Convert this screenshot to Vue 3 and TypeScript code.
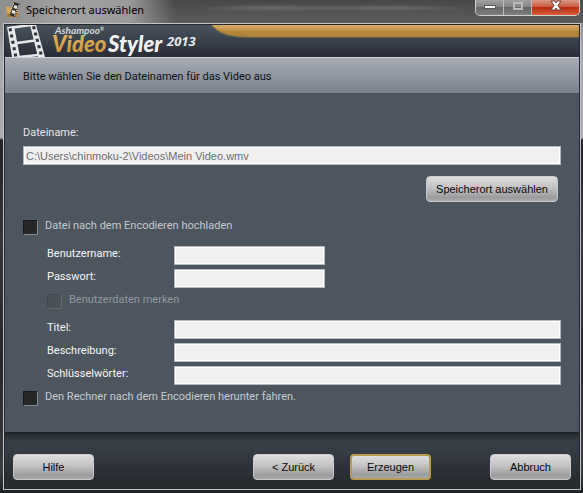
<script setup lang="ts">
import { ref } from 'vue'

interface Field {
  id: string
  label: string
  type: string
  short: boolean
}

const accountFields: Field[] = [
  { id: 'user', label: 'Benutzername:', type: 'text', short: true },
  { id: 'password', label: 'Passwort:', type: 'password', short: true },
]
const videoFields: Field[] = [
  { id: 'title', label: 'Titel:', type: 'text', short: false },
  { id: 'description', label: 'Beschreibung:', type: 'text', short: false },
  { id: 'keywords', label: 'Schlüsselwörter:', type: 'text', short: false },
]

const fileName = ref('C:\\Users\\chinmoku-2\\Videos\\Mein Video.wmv')
const values = ref<Record<string, string>>({})
const upload = ref(false)
const remember = ref(false)
const shutdown = ref(false)
const filmHoles = [0, 1, 2, 3, 4]
</script>

<template>
  <div class="window">
    <header class="titlebar">
      <svg class="app-icon" viewBox="0 0 16 16" aria-hidden="true">
        <path d="M0 5h12v10H1z" fill="#d5a458" />
        <path d="M1 11h11v4H1z" fill="#b77c32" />
        <path d="M8 0l6 2-5 13-6-2z" fill="#302d29" />
        <path d="M8.500 3l3 1-1 3-3-1zM6.500 8l3 1-1 3-3-1z" fill="#eee9da" />
        <path d="M7.500 1.500L3.500 12.500M13 3L8.500 14" stroke="#f4f1e9" stroke-dasharray="1.500 1" />
      </svg>
      <h1 class="title">Speicherort auswählen</h1>
      <div class="controls">
        <button class="control" type="button" aria-label="Minimieren">
          <svg viewBox="0 0 14 12"><rect x="1.500" y="5.500" width="11" height="3" fill="#fff" stroke="#55585c" /></svg>
        </button>
        <button class="control" type="button" aria-label="Maximieren" disabled>
          <svg viewBox="0 0 14 12"><rect x="3" y="3" width="8" height="6" fill="none" stroke="#b9bbbc" stroke-width="2" /></svg>
        </button>
        <button class="control close" type="button" aria-label="Schließen">
          <svg viewBox="0 0 14 12">
            <path d="M2 1h4l1 2 1-2h4L9 5.500 12 10H8L7 8l-1 2H2l3-4.500z" fill="#fff" stroke="#6d3f3c" />
          </svg>
        </button>
      </div>
    </header>

    <div class="client">
      <div class="brand">
        <svg class="logo" viewBox="0 0 200 32" role="img" aria-label="Ashampoo Video Styler 2013">
          <defs>
            <linearGradient id="gold" x1="0" y1="0" x2="0" y2="1">
              <stop offset="0" stop-color="#e9bd68" />
              <stop offset="1" stop-color="#c48b32" />
            </linearGradient>
          </defs>
          <path d="M2 2l7-1 6 31H7zM25 0h6l9 32h-7z" fill="#e6e7e9" />
          <path d="M8 2.500L26 0M12 18l18-2.500M14 32l19-2" fill="none" stroke="#e6e7e9" stroke-width="2.500" />
          <g v-for="n in filmHoles" :key="n" fill="#2f353e">
            <path :transform="`translate(${n * 1.3} ${n * 6.3})`" d="M3.500 3.500l3-.5.600 3-3 .5z" />
            <path :transform="`translate(${n * 1.7} ${n * 6.3})`" d="M27 1.500l3-.5.800 3-3 .5z" />
          </g>
          <text x="50" y="9" class="maker">Ashampoo<tspan class="mark" dy="-3">®</tspan></text>
          <text x="47" y="27" class="product" fill="url(#gold)">Video</text>
          <text x="103" y="27" class="product" fill="#f4f4f5">Styler</text>
          <text x="162" y="21" class="year">2013</text>
        </svg>
        <svg class="swoosh" viewBox="0 0 370 14" preserveAspectRatio="xMinYMin slice" aria-hidden="true">
          <defs>
            <linearGradient id="band" x1="0" y1="0" x2="0" y2="1">
              <stop offset="0" stop-color="#d5a967" />
              <stop offset=".35" stop-color="#c9994d" />
              <stop offset=".5" stop-color="#b58839" />
              <stop offset="1" stop-color="#ad8138" />
            </linearGradient>
          </defs>
          <path d="M0 0h2000v13H42C18 13 8 10 0 0z" fill="#596057" />
          <path d="M2 0h2000v12H42C20 12 10 9 2 0z" fill="url(#band)" />
        </svg>
      </div>
      <p class="headline">Bitte wählen Sie den Dateinamen für das Video aus</p>

      <main class="body">
        <label class="file-label" for="file">Dateiname:</label>
        <input id="file" v-model="fileName" class="box file" type="text" readonly />
        <div class="browse">
          <button class="btn wide" type="button">Speicherort auswählen</button>
        </div>

        <label class="check"><input v-model="upload" type="checkbox" />Datei nach dem Encodieren hochladen</label>
        <div class="group account">
          <div v-for="f in accountFields" :key="f.id" class="row">
            <label :for="f.id">{{ f.label }}</label>
            <input :id="f.id" v-model="values[f.id]" :type="f.type" class="box" :class="{ short: f.short }" />
          </div>
        </div>
        <label class="check nested"><input v-model="remember" type="checkbox" disabled />Benutzerdaten merken</label>
        <div class="group video">
          <div v-for="f in videoFields" :key="f.id" class="row">
            <label :for="f.id">{{ f.label }}</label>
            <input :id="f.id" v-model="values[f.id]" :type="f.type" class="box" />
          </div>
        </div>
        <label class="check"><input v-model="shutdown" type="checkbox" />Den Rechner nach dem Encodieren herunter fahren.</label>
      </main>

      <footer class="footer">
        <button class="btn help" type="button">Hilfe</button>
        <button class="btn" type="button">&lt; Zurück</button>
        <button class="btn primary" type="button">Erzeugen</button>
        <button class="btn cancel" type="button">Abbruch</button>
      </footer>
    </div>
  </div>
</template>

<style>
body {
  margin: 0;
  background: #111;
}
</style>

<style scoped>
* {
  box-sizing: border-box;
}
.window {
  display: flex;
  flex-direction: column;
  min-height: 100vh;
  padding: 0 2px 3px 3px;
  font: 11px/16px Roboto, "Liberation Sans", Arial, sans-serif;
  background:
    linear-gradient(#777, #a5a7aa 50px, #a9acb0 138px, #202225 140px, #34383c 240px, #25282b 360px, #3b3d40 470px, #202122);
}
.titlebar {
  display: flex;
  align-items: flex-start;
  height: 23px;
  margin: 0 -2px 0 -3px;
  padding: 0 3px 0 6px;
  background:
    linear-gradient(90deg, #8d8d8d, #a2a2a2 70px, #999 130px, transparent 175px),
    radial-gradient(ellipse at 47% 8px, #6b6b6b 0, transparent 80px),
    radial-gradient(ellipse at 66% 8px, #6b6b6b 0, transparent 90px),
    linear-gradient(#484848, #5c5c5c);
}
.app-icon {
  width: 16px;
  height: 16px;
  margin-top: 2px;
}
.title {
  flex: 1;
  margin: 1px 0 0 4px;
  color: #000;
  font: 11px/18px "Noto Sans", sans-serif;
}
.controls {
  display: flex;
  height: 16px;
  border: 1px solid #d0d0d0;
  border-top: 0;
  border-radius: 0 0 5px 5px;
  overflow: hidden;
}
.control {
  display: flex;
  align-items: center;
  justify-content: center;
  width: 28px;
  padding: 0 0 4px;
  border: 0;
  border-right: 1px solid #bbb;
  background: linear-gradient(#a0a0a0, #858585 45%, #666 50%, #808080);
}
.control svg {
  width: 14px;
  height: 12px;
}
.close {
  width: 47px;
  border-right: 0;
  background: linear-gradient(#dc9a88, #cb5a42 45%, #b8290e 50%, #d9603c);
}
.client {
  display: flex;
  flex: 1;
  flex-direction: column;
  border: 1px solid #c1c4c8;
  outline: 1px solid #25272b;
  outline-offset: -2px;
  padding: 1px;
  background: #25272b;
}
.brand {
  display: flex;
  height: 32px;
  background: linear-gradient(#48525d, #292d36);
}
.logo {
  flex: none;
  width: 200px;
  height: 32px;
}
.swoosh {
  flex: 1;
  min-width: 0;
  height: 14px;
  margin-left: 5px;
}
.maker {
  fill: #d8dade;
  font: italic bold 10px Lato, sans-serif;
}
.mark {
  font-size: 5px;
}
.product {
  font: italic 900 22px Lato, sans-serif;
}
.year {
  fill: #e8e9eb;
  font: italic bold 13px "Open Sans", sans-serif;
}
.headline {
  margin: 0;
  padding: 11px 18px 9px;
  border-top: 1px solid #cdd0d6;
  color: #101114;
  line-height: 15px;
  background: linear-gradient(#a6abb4, #7b838d);
}
.body {
  display: flex;
  flex: 1;
  flex-direction: column;
  padding: 32px 18px 24px;
  background: #4d565f;
}
.file-label {
  color: #e2e5e9;
}
.box {
  flex: 1;
  min-width: 0;
  height: 19px;
  padding: 0 2px;
  border: 1px solid #b4b9be;
  border-radius: 0;
  outline: 1px solid #fff;
  outline-offset: -2px;
  background: #f0f0f1;
  color: #222;
  font: inherit;
}
.file {
  flex: none;
  margin-top: 5px;
  color: #6c6d70;
  font: 11px/16px "Liberation Sans", Arial, sans-serif;
}
.browse {
  display: flex;
  justify-content: flex-end;
  margin: 11px 3px 16px 0;
}
.btn {
  width: 81px;
  height: 26px;
  padding: 0;
  border: 1px solid #c9cbcd;
  border-radius: 4px;
  background: linear-gradient(#dedede, #c2c2c3 45%, #9c9c9e 85%, #a9a9ab);
  color: #08090b;
  font: 11px/16px "Liberation Sans", Arial, sans-serif;
}
.wide {
  width: 132px;
}
.check {
  display: flex;
  gap: 7px;
  color: #c6cacf;
  line-height: 15px;
}
.check input {
  appearance: none;
  flex: none;
  width: 15px;
  height: 15px;
  margin: 2px 0 0;
  border: 1px solid;
  border-color: #17181a #858b92 #858b92 #17181a;
  background: #252627;
}
.check input:checked {
  box-shadow: inset 0 0 0 3px #252627;
  background: #d7dade;
}
.nested {
  margin: 4px 0 9px 24px;
  color: #939aa1;
}
.nested input:disabled {
  border-color: #42494f #606870 #606870 #42494f;
  background: #4a5157;
}
.group {
  display: flex;
  flex-direction: column;
  gap: 4px;
  margin-left: 24px;
}
.account {
  margin-top: 11px;
}
.video {
  margin: 2px 0 4px;
  margin-left: 24px;
}
.row {
  display: flex;
}
.row label {
  width: 127px;
  color: #f5f6f7;
  line-height: 15px;
}
.short {
  flex: 0 1 151px;
}
.footer {
  display: flex;
  gap: 16px;
  padding: 21px 8px 8px;
  border-top: 1px solid #1c2026;
  background: linear-gradient(#22272d, #353c44 7px, #373d45 18px, #2b2f36 38px, #262b2f);
}
.help {
  margin-right: auto;
}
.primary {
  border: 2px solid #b89a50;
}
.cancel {
  margin-left: 43px;
}
</style>
